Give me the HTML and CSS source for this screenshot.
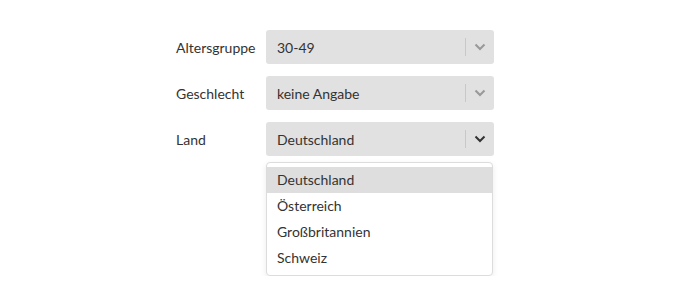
FILE: index.html
```html
<!DOCTYPE html>
<html lang="de">
<head>
<meta charset="utf-8">
<link rel="stylesheet" href="styles.css">
</head>
<body>
<div class="form">
  <div class="row">
    <span class="label">Altersgruppe</span>
    <div class="select">
      <span class="value">30-49</span>
      <span class="sep"></span>
      <svg class="chev" width="12" height="8" viewBox="0 0 12 8"><path d="M1.5 1.5 L6 6 L10.5 1.5" fill="none" stroke="currentColor" stroke-width="2"/></svg>
    </div>
  </div>
  <div class="row">
    <span class="label">Geschlecht</span>
    <div class="select">
      <span class="value">keine Angabe</span>
      <span class="sep"></span>
      <svg class="chev" width="12" height="8" viewBox="0 0 12 8"><path d="M1.5 1.5 L6 6 L10.5 1.5" fill="none" stroke="currentColor" stroke-width="2"/></svg>
    </div>
  </div>
  <div class="row">
    <span class="label">Land</span>
    <div class="select open">
      <span class="value">Deutschland</span>
      <span class="sep"></span>
      <svg class="chev" width="12" height="8" viewBox="0 0 12 8"><path d="M1.5 1.5 L6 6 L10.5 1.5" fill="none" stroke="currentColor" stroke-width="2"/></svg>
    </div>
  </div>
  <div class="row">
    <span class="label"></span>
    <ul class="menu">
      <li class="active">Deutschland</li>
      <li>Österreich</li>
      <li>Großbritannien</li>
      <li>Schweiz</li>
    </ul>
  </div>
</div>
</body>
</html>
```

FILE: styles.css
```css
html, body {
  margin: 0;
  padding: 0;
  background: #ffffff;
}
body {
  font-family: Lato, "Open Sans", sans-serif;
  font-size: 14px;
  color: #333333;
}
.form {
  padding: 30px 0 0 176px;
  display: flex;
  flex-direction: column;
  gap: 12px;
}
.row {
  display: flex;
  align-items: center;
}
.row:last-child {
  margin-top: -6px;
  align-items: flex-start;
}
.label {
  width: 90px;
  flex: none;
}
.select {
  width: 228px;
  height: 34px;
  box-sizing: border-box;
  background: #e1e1e1;
  border-radius: 3px;
  display: flex;
  align-items: center;
  padding-left: 11px;
}
.value {
  flex: 1;
}
.sep {
  width: 1px;
  height: 18px;
  background: #c8c8c8;
}
.chev {
  margin: 0 8px 0 8px;
  color: #999999;
}
.open .chev {
  color: #333333;
}
.menu {
  list-style: none;
  margin: 0;
  padding: 4px 0;
  width: 227px;
  box-sizing: border-box;
  border: 1px solid #dcdcdc;
  border-radius: 4px;
  background: #fff;
  box-shadow: 0 2px 6px rgba(0,0,0,0.08);
}
.menu li {
  height: 26px;
  line-height: 26px;
  padding-left: 10px;
}
.menu li.active {
  background: #dedede;
}
```
